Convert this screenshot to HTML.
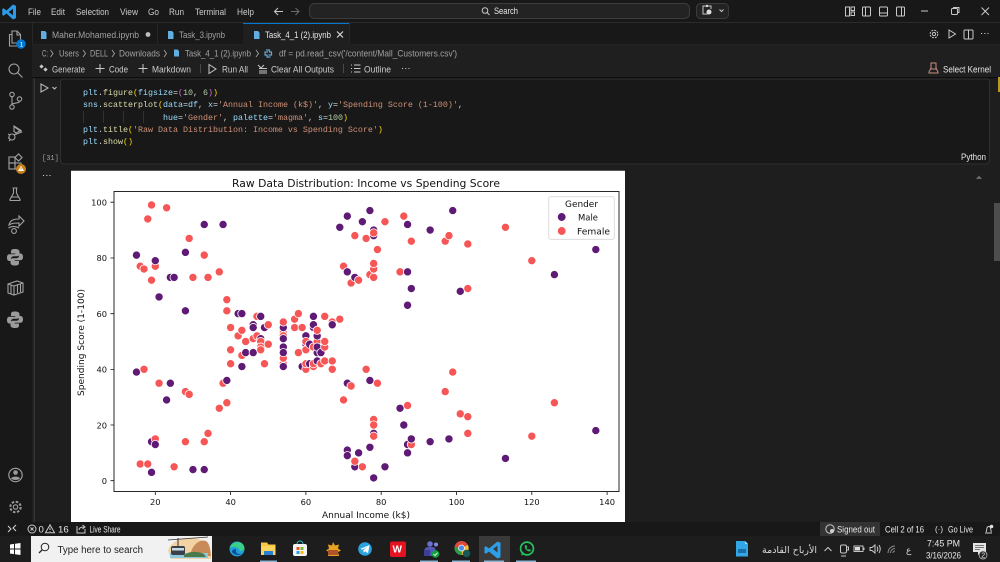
<!DOCTYPE html>
<html><head><meta charset="utf-8"><title>Task_4_1</title>
<style>
html,body{margin:0;padding:0;width:1000px;height:562px;overflow:hidden;background:#1f1f1f}
svg{display:block;position:absolute;left:0;top:0}
text{font-family:"Liberation Sans",sans-serif;font-size:9.6px;fill:#cccccc;white-space:pre}
.d{fill:#a2a2a2}
.w{fill:#e8e8e8}
.mono{font-family:"Liberation Mono",monospace;font-size:8.34px}
.c text,.c{font-family:"DejaVu Sans",sans-serif;fill:#111}
.ic{fill:none;stroke:#c8c8c8;stroke-width:1}
.ab{fill:none;stroke:#a2a2a2;stroke-width:1.1}
circle.m,circle.f{cx:calc(var(--x)*3.765px + 80px);cy:calc(480.7px - var(--y)*2.785px);r:4.1px;stroke:#fff;stroke-width:.8px}
circle.m{fill:#5e1a74}
circle.f{fill:#f65656}
tspan.v{fill:#9cdcfe}tspan.y{fill:#dcdcaa}tspan.g{fill:#ffd700}tspan.o{fill:#da70d6}tspan.s{fill:#ce9178}tspan.n{fill:#b5cea8}tspan.t{fill:#d4d4d4}
</style></head><body>
<svg width="1000" height="562" viewBox="0 0 1000 562">
<!-- base -->
<rect width="1000" height="562" fill="#1e1e1e"/>
<rect width="1000" height="23" fill="#181818"/>
<rect y="22" width="1000" height="1" fill="#2b2b2b"/>
<rect y="23" width="1000" height="22" fill="#181818"/>
<rect y="44.500" width="1000" height="1" fill="#2b2b2b"/>
<rect x="0" y="23" width="32" height="499" fill="#181818"/>
<rect x="32" y="45" width="968" height="32" fill="#1f1f1f"/>
<rect x="32" y="77" width="968" height="1.300" fill="#0e0e0e"/>
<rect x="33.500" y="78" width="1.500" height="444" fill="#333"/>
<!-- logo -->
<path d="M13 4.500 6.500 10.500 3.500 8.300 2.300 8.900v6.200l1.200.6 3-2.200L13 19.500l3-1.400V5.900zM13 8.800v6.400L8.700 12z" fill="#2b9be8" fill-rule="evenodd"/>
<!-- menu -->
<text x="28" y="15" textLength="13" lengthAdjust="spacingAndGlyphs">File</text>
<text x="51" y="15" textLength="14" lengthAdjust="spacingAndGlyphs">Edit</text>
<text x="76" y="15" textLength="33" lengthAdjust="spacingAndGlyphs">Selection</text>
<text x="120" y="15" textLength="18" lengthAdjust="spacingAndGlyphs">View</text>
<text x="148" y="15" textLength="11" lengthAdjust="spacingAndGlyphs">Go</text>
<text x="169" y="15" textLength="15" lengthAdjust="spacingAndGlyphs">Run</text>
<text x="195" y="15" textLength="31" lengthAdjust="spacingAndGlyphs">Terminal</text>
<text x="237" y="15" textLength="17" lengthAdjust="spacingAndGlyphs">Help</text>
<path class="ic" d="M283 11.500h-8M278 8l-3.500 3.500L278 15"/>
<path d="M299 11.500h-8M295.500 8l3.500 3.500L295.500 15" fill="none" stroke="#6a6a6a"/>
<rect x="309.500" y="3.500" width="380" height="15" rx="5" fill="#232323" stroke="#3c3c3c"/>
<circle cx="485" cy="10.500" r="2.800" class="ic"/><path class="ic" d="M487 12.500l2.500 2.500"/>
<text x="494" y="14" class="w" textLength="24" lengthAdjust="spacingAndGlyphs">Search</text>
<rect x="696.500" y="3.500" width="32" height="15" rx="4" fill="#232323" stroke="#3c3c3c"/>
<path class="ic" d="M708 14h-5v-8h8v3"/><circle cx="709" cy="12" r="2.500" fill="#ddd"/><circle cx="707" cy="6" r="1.200" fill="#ddd"/>
<path class="ic" d="M719.500 9.500l2 2 2-2"/>
<g class="ic" stroke="#dcdcdc"><rect x="845.500" y="7" width="4" height="9"/><rect x="851" y="7" width="3.500" height="3.500"/><rect x="851" y="12" width="3.500" height="3.500"/>
<rect x="862.500" y="7" width="8" height="9" rx="1"/><path d="M865.500 7v9"/>
<rect x="879.500" y="7" width="8" height="9" rx="1"/><path d="M879.500 13h8"/>
<rect x="896.500" y="7" width="8" height="9" rx="1"/><path d="M901.500 7v9"/>
<path d="M921 11h7"/><rect x="951.500" y="8.500" width="6" height="6" rx="1"/><path d="M953.500 8.500v-1h5.500v5h-1"/>
<path d="M981.500 7.500l7.500 7.500M989 7.500 981.500 15"/></g>
<!-- tabs -->
<rect x="157" y="23" width=".8" height="21" fill="#2b2b2b"/>
<rect x="243" y="23" width="106" height="22" fill="#1f1f1f"/>
<rect x="243" y="23" width="106" height="1" fill="#0078d4"/>
<rect x="349" y="23" width=".8" height="21" fill="#2b2b2b"/>
<rect x="32" y="23" width=".8" height="21" fill="#2b2b2b"/>
<g fill="#61aee0"><path d="M41 31h4l1.500 1.500V39h-5.500zM168 31h4l1.500 1.500V39h-5.500zM254 31h4l1.500 1.500V39h-5.500z"/></g>
<text x="52" y="38" class="d" textLength="87" lengthAdjust="spacingAndGlyphs">Maher.Mohamed.ipynb</text>
<circle cx="148" cy="34.500" r="2.400" fill="#bdbdbd"/>
<text x="179" y="38" class="d" textLength="46" lengthAdjust="spacingAndGlyphs">Task_3.ipynb</text>
<text x="265" y="38" class="w" textLength="66" lengthAdjust="spacingAndGlyphs">Task_4_1 (2).ipynb</text>
<path d="M337 31.500l6 6M343 31.500l-6 6" stroke="#e0e0e0" stroke-width="1.100" fill="none"/>
<g class="ic"><circle cx="934" cy="34" r="1.600"/><circle cx="934" cy="34" r="3.800" stroke-dasharray="2 1"/><path d="M949 30v8l6.500-4z"/><rect x="964" y="30" width="9" height="9" rx="1"/><path d="M968.500 30v9"/></g>
<text x="980" y="36" class="w">···</text>
<!-- breadcrumbs -->
<text x="42" y="56.500" class="d" textLength="6" lengthAdjust="spacingAndGlyphs">C:</text>
<path d="M50.500 50l2.500 3.500-2.500 3.500M83 50l2.500 3.500L83 57M112 50l2.500 3.500-2.500 3.500M164 50l2.500 3.500-2.500 3.500M256 50l2.500 3.500-2.500 3.500" fill="none" stroke="#a2a2a2" stroke-width=".9"/>
<text x="59" y="56.500" class="d" textLength="20" lengthAdjust="spacingAndGlyphs">Users</text>
<text x="90" y="56.500" class="d" textLength="18" lengthAdjust="spacingAndGlyphs">DELL</text>
<text x="119" y="56.500" class="d" textLength="41" lengthAdjust="spacingAndGlyphs">Downloads</text>
<path d="M174 49.500h3.500l1.500 1.500v5.500h-5z" fill="#61aee0"/>
<text x="185" y="56.500" class="d" textLength="66" lengthAdjust="spacingAndGlyphs">Task_4_1 (2).ipynb</text>
<path d="M266 50h3.500v2h2v3h-3M270.500 57h-3.500v-2h-2v-3h3" fill="none" stroke="#6aa3cc" stroke-width="1.200"/>
<text x="279" y="56.500" class="d" textLength="178" lengthAdjust="spacingAndGlyphs">df = pd.read_csv('/content/Mall_Customers.csv')</text>
<!-- toolbar -->
<g fill="#c8c8c8"><rect x="40" y="65" width="3" height="3" transform="rotate(45 41.500 66.500)"/><rect x="44" y="68" width="3" height="3" transform="rotate(45 45.500 69.500)"/></g>
<text x="52" y="72.500" textLength="33" lengthAdjust="spacingAndGlyphs">Generate</text>
<path class="ic" d="M100 64v9M95.500 68.500h9M143 64v9M138.500 68.500h9"/>
<text x="109" y="72.500" textLength="19" lengthAdjust="spacingAndGlyphs">Code</text>
<text x="152" y="72.500" textLength="39" lengthAdjust="spacingAndGlyphs">Markdown</text>
<rect x="200" y="64" width=".8" height="9" fill="#555"/>
<path class="ic" d="M209 64.500v9l7-4.500z"/>
<text x="222" y="72.500" textLength="26" lengthAdjust="spacingAndGlyphs">Run All</text>
<path class="ic" d="M258 65l3 3 3-3M259 68.500h8M259 71h8M259 73h8"/>
<text x="271" y="72.500" textLength="63" lengthAdjust="spacingAndGlyphs">Clear All Outputs</text>
<rect x="343" y="64" width=".8" height="9" fill="#555"/>
<path class="ic" d="M351 65h1M351 68.500h1M351 72h1M354 65h6.500M354 68.500h6.500M354 72h6.500"/>
<text x="364" y="72.500" textLength="27" lengthAdjust="spacingAndGlyphs">Outline</text>
<text x="401" y="71" class="w">···</text>
<path d="M431 63h5v5l2 4v1h-9v-1l2-4zM431 69h5" fill="none" stroke="#c98f7d" stroke-width="1" transform="translate(500 0)"/>
<text x="943" y="72.500" class="w" textLength="48" lengthAdjust="spacingAndGlyphs">Select Kernel</text>
<!-- activity bar -->
<path class="ab" d="M12 31h5l3.500 3.500V43H12zM17 31v4h3.500M12 34.500H9.500V46H17v-3"/>
<circle cx="21" cy="44" r="4.700" fill="#0078d4"/><text x="19.600" y="46.500" style="fill:#fff;font-size:6.500px">1</text>
<circle cx="14" cy="69" r="5" class="ab"/><path class="ab" d="M17.500 72.500l5 5"/>
<g class="ab"><circle cx="12" cy="94.500" r="2.200"/><circle cx="12" cy="107" r="2.200"/><circle cx="19.500" cy="99" r="2.200"/><path d="M12 96.700v8M19.500 101.200c0 2.500-7.500 1.500-7.500 3.300"/></g>
<g class="ab"><path d="M14 126.500v5l2 1.500 5-2.500-7-4.500zM14 126.500l7.500 5.500-6 2.500"/><circle cx="12" cy="137" r="3"/><path d="M8 134l2 1M8 138h1.500M9 141l1.500-1.500M16 134l-2 1"/></g>
<g class="ab"><rect x="9" y="157" width="6" height="6"/><rect x="9" y="163" width="6" height="6"/><rect x="15" y="163" width="6" height="6"/><rect x="16" y="155" width="5" height="5" transform="rotate(45 18.500 157.500)"/></g>
<circle cx="21" cy="169" r="5" fill="#c8801a"/><path d="M21 165.800 24 171h-6z" fill="#fff"/><rect x="20.600" y="167.300" width=".9" height="2.200" fill="#c8801a"/>
<path class="ab" d="M12.500 188h5M13.500 188v5l-3.500 6.500q-.5 1 .5 1h9q1 0 .5-1l-3.500-6.500v-5M11.500 197h7"/>
<path class="ab" d="M9 225c1-5 5-6 10-6v-3l5 5-5 5v-3c-4 0-7 0-10 2z"/><circle cx="14" cy="231" r="2.400" class="ab"/><path class="ab" d="M8.500 228c3-2 7-2 10.500 0"/>
<g fill="#9b9b9b"><path id="py" d="M15 249c-2.500 0-4 .7-4 2.300v2.200h4.300v.8H9.500c-1.800 0-2.500 1.300-2.500 3.300 0 2 .8 3.400 2.500 3.400h1.500v-2.200c0-1.500 1.300-2.600 2.800-2.600h3.500c1.300 0 2.200-1 2.200-2.200v-2.500c0-1.500-1.800-2.500-4.500-2.500zM15 265.500c2.500 0 4-.7 4-2.300V261h-4.300v-.8h5.800c1.800 0 2.500-1.300 2.500-3.300 0-2-.8-3.400-2.500-3.400H19v2.200c0 1.500-1.300 2.600-2.800 2.600h-3.500c-1.300 0-2.200 1-2.200 2.200v2.500c0 1.500 1.800 2.500 4.500 2.500z"/>
<use href="#py" y="62.500"/></g>
<g class="ab"><path d="M8 284l9-3 6 2v9l-9 3-6-2zM8 284l6 2v9M14 286l9-3M11 285v8.500M17.500 284.500v8.500M20.500 283.500V292"/></g>
<circle cx="15.500" cy="475" r="6.700" class="ab"/><circle cx="15.500" cy="472.500" r="2.300" fill="#9b9b9b"/><path d="M11 478.500c1-2.500 8-2.500 9 0-2 2-7 2-9 0z" fill="#9b9b9b"/>
<circle cx="15.500" cy="507" r="2.200" class="ab"/><circle cx="15.500" cy="507" r="5.200" fill="none" stroke="#9b9b9b" stroke-width="2" stroke-dasharray="2.500 1.600"/>
<!-- code cell -->
<rect x="60.500" y="79" width="929" height="85" rx="3" fill="#181818" stroke="#2f2f2f"/>
<path class="ic" d="M41 84v8l7-4z"/><path class="ic" d="M52.500 87l2 2 2-2"/>
<g fill="#3c3c3c"><rect x="83" y="111" width=".7" height="12"/><rect x="103" y="111" width=".7" height="12"/><rect x="123" y="111" width=".7" height="12"/><rect x="143" y="111" width=".7" height="12"/></g>
<text x="83" y="95" class="mono"><tspan class="v">plt</tspan><tspan class="t">.</tspan><tspan class="y">figure</tspan><tspan class="g">(</tspan><tspan class="v">figsize</tspan><tspan class="t">=</tspan><tspan class="o">(</tspan><tspan class="n">10</tspan><tspan class="t">, </tspan><tspan class="n">6</tspan><tspan class="o">)</tspan><tspan class="g">)</tspan></text>
<text x="83" y="107" class="mono"><tspan class="v">sns</tspan><tspan class="t">.</tspan><tspan class="y">scatterplot</tspan><tspan class="g">(</tspan><tspan class="v">data</tspan><tspan class="t">=</tspan><tspan class="v">df</tspan><tspan class="t">, </tspan><tspan class="v">x</tspan><tspan class="t">=</tspan><tspan class="s">'Annual Income (k$)'</tspan><tspan class="t">, </tspan><tspan class="v">y</tspan><tspan class="t">=</tspan><tspan class="s">'Spending Score (1-100)'</tspan><tspan class="t">,</tspan></text>
<text x="163" y="120" class="mono"><tspan class="v">hue</tspan><tspan class="t">=</tspan><tspan class="s">'Gender'</tspan><tspan class="t">, </tspan><tspan class="v">palette</tspan><tspan class="t">=</tspan><tspan class="s">'magma'</tspan><tspan class="t">, </tspan><tspan class="v">s</tspan><tspan class="t">=</tspan><tspan class="n">100</tspan><tspan class="g">)</tspan></text>
<text x="83" y="132" class="mono"><tspan class="v">plt</tspan><tspan class="t">.</tspan><tspan class="y">title</tspan><tspan class="g">(</tspan><tspan class="s">'Raw Data Distribution: Income vs Spending Score'</tspan><tspan class="g">)</tspan></text>
<text x="83" y="144" class="mono"><tspan class="v">plt</tspan><tspan class="t">.</tspan><tspan class="y">show</tspan><tspan class="g">()</tspan></text>
<text x="42" y="160" class="mono d" style="font-size:7px">[31]</text>
<text x="961" y="160" class="w" textLength="25" lengthAdjust="spacingAndGlyphs">Python</text>
<text x="42" y="178" class="w">···</text>
<path d="M976 179l3-3.500 3 3.500z" fill="#6a6a6a"/>
<rect x="994" y="203" width="6" height="58" fill="#4d4d4d"/>
<rect x="998" y="77" width="2" height="15" fill="#b99a1f"/>
<!-- figure -->
<rect x="71" y="170" width="554" height="352" fill="#fff"/>
<rect x="71" y="170" width="554" height="1" fill="#555"/>
<g class="c">
<rect x="114" y="191.500" width="505" height="300" fill="none" stroke="#111" stroke-width=".9"/>
<text x="232" y="187" style="font-size:10.500px" textLength="268" lengthAdjust="spacingAndGlyphs">Raw Data Distribution: Income vs Spending Score</text>
<path d="M155.300 492v3M230.600 492v3M305.900 492v3M381.200 492v3M456.500 492v3M531.800 492v3M607.100 492v3M114 202.200h-3.500M114 258h-3.500M114 313.700h-3.500M114 369.400h-3.500M114 425h-3.500M114 480.700h-3.500" stroke="#111" stroke-width=".8" fill="none"/>
<text x="155.300" y="505" text-anchor="middle" style="font-size:8.300px">20</text>
<text x="230.600" y="505" text-anchor="middle" style="font-size:8.300px">40</text>
<text x="305.900" y="505" text-anchor="middle" style="font-size:8.300px">60</text>
<text x="381.200" y="505" text-anchor="middle" style="font-size:8.300px">80</text>
<text x="456.500" y="505" text-anchor="middle" style="font-size:8.300px">100</text>
<text x="531.800" y="505" text-anchor="middle" style="font-size:8.300px">120</text>
<text x="607.100" y="505" text-anchor="middle" style="font-size:8.300px">140</text>
<text x="107" y="205.500" text-anchor="end" style="font-size:8.300px">100</text>
<text x="107" y="261.200" text-anchor="end" style="font-size:8.300px">80</text>
<text x="107" y="317" text-anchor="end" style="font-size:8.300px">60</text>
<text x="107" y="372.600" text-anchor="end" style="font-size:8.300px">40</text>
<text x="107" y="428.300" text-anchor="end" style="font-size:8.300px">20</text>
<text x="107" y="484" text-anchor="end" style="font-size:8.300px">0</text>
<text x="322" y="518" style="font-size:8.800px" textLength="88" lengthAdjust="spacingAndGlyphs">Annual Income (k$)</text>
<text transform="translate(84 396) rotate(-90)" style="font-size:8.800px" textLength="107" lengthAdjust="spacingAndGlyphs">Spending Score (1-100)</text>
</g>
<g>
<circle class=m style=--x:15;--y:39 /><circle class=m style=--x:15;--y:81 /><circle class=f style=--x:16;--y:6 /><circle class=f style=--x:16;--y:77 /><circle class=f style=--x:17;--y:40 /><circle class=f style=--x:17;--y:76 /><circle class=f style=--x:18;--y:6 /><circle class=f style=--x:18;--y:94 /><circle class=m style=--x:19;--y:3 /><circle class=f style=--x:19;--y:72 />
<circle class=m style=--x:19;--y:14 /><circle class=f style=--x:19;--y:99 /><circle class=f style=--x:20;--y:15 /><circle class=f style=--x:20;--y:77 /><circle class=m style=--x:20;--y:13 /><circle class=m style=--x:20;--y:79 /><circle class=f style=--x:21;--y:35 /><circle class=m style=--x:21;--y:66 /><circle class=m style=--x:23;--y:29 /><circle class=f style=--x:23;--y:98 />
<circle class=m style=--x:24;--y:35 /><circle class=m style=--x:24;--y:73 /><circle class=f style=--x:25;--y:5 /><circle class=m style=--x:25;--y:73 /><circle class=f style=--x:28;--y:14 /><circle class=m style=--x:28;--y:82 /><circle class=f style=--x:28;--y:32 /><circle class=m style=--x:28;--y:61 /><circle class=f style=--x:29;--y:31 /><circle class=f style=--x:29;--y:87 />
<circle class=m style=--x:30;--y:4 /><circle class=f style=--x:30;--y:73 /><circle class=m style=--x:33;--y:4 /><circle class=m style=--x:33;--y:92 /><circle class=f style=--x:33;--y:14 /><circle class=f style=--x:33;--y:81 /><circle class=f style=--x:34;--y:17 /><circle class=f style=--x:34;--y:73 /><circle class=f style=--x:37;--y:26 /><circle class=f style=--x:37;--y:75 />
<circle class=f style=--x:38;--y:35 /><circle class=m style=--x:38;--y:92 /><circle class=m style=--x:39;--y:36 /><circle class=f style=--x:39;--y:61 /><circle class=f style=--x:39;--y:28 /><circle class=f style=--x:39;--y:65 /><circle class=f style=--x:40;--y:55 /><circle class=f style=--x:40;--y:47 /><circle class=f style=--x:40;--y:42 /><circle class=f style=--x:40;--y:42 />
<circle class=f style=--x:42;--y:52 /><circle class=m style=--x:42;--y:60 /><circle class=f style=--x:43;--y:54 /><circle class=m style=--x:43;--y:60 /><circle class=f style=--x:43;--y:45 /><circle class=m style=--x:43;--y:41 /><circle class=f style=--x:44;--y:50 /><circle class=m style=--x:44;--y:46 /><circle class=f style=--x:46;--y:51 /><circle class=m style=--x:46;--y:46 />
<circle class=m style=--x:46;--y:56 /><circle class=m style=--x:46;--y:55 /><circle class=f style=--x:47;--y:52 /><circle class=f style=--x:47;--y:59 /><circle class=m style=--x:48;--y:51 /><circle class=m style=--x:48;--y:59 /><circle class=f style=--x:48;--y:50 /><circle class=f style=--x:48;--y:48 /><circle class=m style=--x:48;--y:59 /><circle class=f style=--x:48;--y:47 />
<circle class=m style=--x:49;--y:55 /><circle class=f style=--x:49;--y:42 /><circle class=f style=--x:50;--y:49 /><circle class=f style=--x:50;--y:56 /><circle class=m style=--x:54;--y:47 /><circle class=m style=--x:54;--y:54 /><circle class=f style=--x:54;--y:53 /><circle class=m style=--x:54;--y:48 /><circle class=f style=--x:54;--y:52 /><circle class=f style=--x:54;--y:42 />
<circle class=m style=--x:54;--y:51 /><circle class=m style=--x:54;--y:55 /><circle class=m style=--x:54;--y:41 /><circle class=f style=--x:54;--y:44 /><circle class=f style=--x:54;--y:57 /><circle class=m style=--x:54;--y:46 /><circle class=f style=--x:57;--y:58 /><circle class=f style=--x:57;--y:55 /><circle class=f style=--x:58;--y:60 /><circle class=f style=--x:58;--y:46 />
<circle class=f style=--x:59;--y:55 /><circle class=m style=--x:59;--y:41 /><circle class=m style=--x:60;--y:49 /><circle class=f style=--x:60;--y:40 /><circle class=f style=--x:60;--y:42 /><circle class=m style=--x:60;--y:52 /><circle class=f style=--x:60;--y:47 /><circle class=f style=--x:60;--y:50 /><circle class=m style=--x:61;--y:42 /><circle class=m style=--x:61;--y:49 />
<circle class=f style=--x:62;--y:41 /><circle class=f style=--x:62;--y:48 /><circle class=m style=--x:62;--y:59 /><circle class=m style=--x:62;--y:55 /><circle class=m style=--x:62;--y:56 /><circle class=f style=--x:62;--y:42 /><circle class=f style=--x:63;--y:50 /><circle class=m style=--x:63;--y:46 /><circle class=m style=--x:63;--y:43 /><circle class=m style=--x:63;--y:48 />
<circle class=m style=--x:63;--y:52 /><circle class=f style=--x:63;--y:54 /><circle class=f style=--x:64;--y:42 /><circle class=m style=--x:64;--y:46 /><circle class=f style=--x:65;--y:48 /><circle class=f style=--x:65;--y:50 /><circle class=f style=--x:65;--y:43 /><circle class=f style=--x:65;--y:59 /><circle class=f style=--x:67;--y:43 /><circle class=f style=--x:67;--y:57 />
<circle class=m style=--x:67;--y:56 /><circle class=f style=--x:67;--y:40 /><circle class=f style=--x:69;--y:58 /><circle class=m style=--x:69;--y:91 /><circle class=f style=--x:70;--y:29 /><circle class=f style=--x:70;--y:77 /><circle class=m style=--x:71;--y:35 /><circle class=m style=--x:71;--y:95 /><circle class=m style=--x:71;--y:11 /><circle class=m style=--x:71;--y:75 />
<circle class=m style=--x:71;--y:9 /><circle class=m style=--x:71;--y:75 /><circle class=f style=--x:72;--y:34 /><circle class=f style=--x:72;--y:71 /><circle class=m style=--x:73;--y:5 /><circle class=f style=--x:73;--y:88 /><circle class=f style=--x:73;--y:7 /><circle class=m style=--x:73;--y:73 /><circle class=m style=--x:74;--y:10 /><circle class=f style=--x:74;--y:72 />
<circle class=f style=--x:75;--y:5 /><circle class=m style=--x:75;--y:93 /><circle class=f style=--x:76;--y:40 /><circle class=f style=--x:76;--y:87 /><circle class=m style=--x:77;--y:12 /><circle class=m style=--x:77;--y:97 /><circle class=m style=--x:77;--y:36 /><circle class=f style=--x:77;--y:74 /><circle class=f style=--x:78;--y:22 /><circle class=m style=--x:78;--y:90 />
<circle class=m style=--x:78;--y:17 /><circle class=m style=--x:78;--y:88 /><circle class=f style=--x:78;--y:20 /><circle class=f style=--x:78;--y:76 /><circle class=f style=--x:78;--y:16 /><circle class=f style=--x:78;--y:89 /><circle class=m style=--x:78;--y:1 /><circle class=f style=--x:78;--y:78 /><circle class=m style=--x:78;--y:1 /><circle class=f style=--x:78;--y:73 />
<circle class=f style=--x:79;--y:35 /><circle class=f style=--x:79;--y:83 /><circle class=m style=--x:81;--y:5 /><circle class=f style=--x:81;--y:93 /><circle class=m style=--x:85;--y:26 /><circle class=f style=--x:85;--y:75 /><circle class=m style=--x:86;--y:20 /><circle class=f style=--x:86;--y:95 /><circle class=f style=--x:87;--y:27 /><circle class=m style=--x:87;--y:63 />
<circle class=m style=--x:87;--y:13 /><circle class=m style=--x:87;--y:75 /><circle class=m style=--x:87;--y:10 /><circle class=m style=--x:87;--y:92 /><circle class=f style=--x:88;--y:13 /><circle class=f style=--x:88;--y:86 /><circle class=m style=--x:88;--y:15 /><circle class=m style=--x:88;--y:69 /><circle class=m style=--x:93;--y:14 /><circle class=m style=--x:93;--y:90 />
<circle class=f style=--x:97;--y:32 /><circle class=f style=--x:97;--y:86 /><circle class=m style=--x:98;--y:15 /><circle class=f style=--x:98;--y:88 /><circle class=f style=--x:99;--y:39 /><circle class=m style=--x:99;--y:97 /><circle class=f style=--x:101;--y:24 /><circle class=m style=--x:101;--y:68 /><circle class=f style=--x:103;--y:17 /><circle class=f style=--x:103;--y:85 />
<circle class=f style=--x:103;--y:23 /><circle class=f style=--x:103;--y:69 /><circle class=m style=--x:113;--y:8 /><circle class=f style=--x:113;--y:91 /><circle class=f style=--x:120;--y:16 /><circle class=f style=--x:120;--y:79 /><circle class=f style=--x:126;--y:28 /><circle class=m style=--x:126;--y:74 /><circle class=m style=--x:137;--y:18 /><circle class=m style=--x:137;--y:83 />
</g>
<rect x="548.700" y="196.700" width="65.600" height="42.600" rx="2" fill="#fff" fill-opacity=".8" stroke="#d5d5d5" stroke-width=".8"/>
<g class="c">
<text x="565" y="207" style="font-size:8.800px" textLength="33" lengthAdjust="spacingAndGlyphs">Gender</text>
<text x="578" y="220.500" style="font-size:8.800px" textLength="20" lengthAdjust="spacingAndGlyphs">Male</text>
<text x="577" y="234.500" style="font-size:8.800px" textLength="33" lengthAdjust="spacingAndGlyphs">Female</text>
</g>
<circle cx="561.700" cy="217" r="4.300" fill="#5e1a74" stroke="#fff" stroke-width=".7"/>
<circle cx="561.700" cy="231" r="4.300" fill="#f65656" stroke="#fff" stroke-width=".7"/>
<!-- status bar -->
<rect y="522" width="1000" height="14" fill="#181818"/>
<path d="M8 526l3 3-3 3M16 525l-3 3 3 3" fill="none" stroke="#d5d5d5" stroke-width="1"/>
<circle cx="32" cy="529" r="4" class="ic"/><path class="ic" d="M30.500 527.500l3 3M33.500 527.500l-3 3"/>
<text x="38.500" y="532.500" class="w">0</text>
<path class="ic" d="M50 524.800l4.500 8h-9zM50 527.500v2.500M50 531v.7"/>
<text x="58" y="532.500" class="w">16</text>
<path class="ic" d="M77 526v7h8v-4M79 530c0-2 2-3 5-3M82.500 525l2.500 2-2.500 2"/>
<text x="89.500" y="532.500" class="w" textLength="31" lengthAdjust="spacingAndGlyphs">Live Share</text>
<rect x="820" y="522" width="60" height="14" fill="#333"/>
<circle cx="830" cy="529" r="4.200" class="ic"/><circle cx="832" cy="531" r="2" fill="#d0d0d0"/>
<text x="837" y="532.500" class="w" textLength="38" lengthAdjust="spacingAndGlyphs">Signed out</text>
<text x="885" y="532.500" class="w" textLength="39" lengthAdjust="spacingAndGlyphs">Cell 2 of 16</text>
<text x="935" y="532" class="w" style="font-size:8px">(·)</text>
<text x="948" y="532.500" class="w" textLength="25" lengthAdjust="spacingAndGlyphs">Go Live</text>
<path class="ic" d="M985 533h7M986 532c1-1 .5-3 1-4 .5-2 3-2 3.500 0 .5 1 0 3 1 4"/><circle cx="991.500" cy="526.500" r="1.800" fill="#ddd"/>
<!-- taskbar -->
<rect y="536" width="1000" height="26" fill="#1d1d1d"/>
<path d="M10 544.500l4-.6v4.600h-4zM15 543.800l5.500-.8v5.500H15zM10 549.500h4v4.600l-4-.6zM15 549.500h5.500v5.500L15 554.200z" fill="#fff"/>
<rect x="31" y="536" width="181" height="26" fill="#f1f1f1"/>
<circle cx="45" cy="547" r="3.800" fill="none" stroke="#222" stroke-width="1"/><path d="M42.300 549.700 39 553" stroke="#222" stroke-width="1.300"/>
<text x="57.500" y="553" textLength="85.500" lengthAdjust="spacingAndGlyphs" style="fill:#222;font-size:10px">Type here to search</text>
<path d="M168 551c2-10 15-14 26-13 8 1 14 5 17 13v8h-40z" fill="#f3d3a4"/>
<path d="M190 556c2-12 10-17 16-15 4 3 4 8 5 15z" fill="#c98a5a"/>
<rect x="170" y="553" width="38" height="5" fill="#8fc7dd"/><path d="M184 555c5-4 14-4 20-1l2 3h-22z" fill="#4a7a4a"/>
<path d="M168 540l40-3" stroke="#333" stroke-width=".7"/>
<rect x="171" y="546" width="14" height="9" rx="2" fill="#3a3f48"/><rect x="172" y="548" width="12" height="2.500" fill="#c8d8e0"/><path d="M178 538v8" stroke="#333"/>
<!-- taskbar apps -->
<circle cx="237" cy="549" r="7.500" fill="#1f9fd8"/><path d="M229.500 549c1-8 14-10 15-1 0 2-2 3-5 3 1-4-9-6-10-2z" fill="#3bd08a"/><path d="M232 552c2 3 7 4 10 2-4 1-7-1-6-5-2 0-4 1-4 3z" fill="#0d4a96"/>
<path d="M261 542.500h6l1.500 2h7v10.500h-14.500z" fill="#f6c744"/><rect x="261" y="546" width="14.500" height="9" fill="#fad45c"/><rect x="264" y="551" width="9" height="4" fill="#2b7fd4"/>
<rect x="293" y="544" width="14" height="12" rx="2" fill="#f4f4f4"/><path d="M297 544c0-4 6-4 6 0" fill="none" stroke="#31bcd0"/><rect x="296.500" y="547" width="3" height="3" fill="#e8512d"/><rect x="300.500" y="547" width="3" height="3" fill="#7cbb2f"/><rect x="296.500" y="551" width="3" height="3" fill="#21a1f1"/><rect x="300.500" y="551" width="3" height="3" fill="#fdb813"/>
<path d="M333 542l2 3.500 4-1-1 4 3 2-3 1.500 1 4h-11l1-4-3-1.500 3-2-1-4 4 1z" fill="#e8a321"/><rect x="328" y="550" width="10" height="5" fill="#b0522a"/>
<circle cx="365" cy="549" r="6.800" fill="#2aa4df"/><path d="M360.500 548.800l9-3.700-1.500 8.200-2.800-2-1.400 1.400-.4-2.500 3.600-3-4.700 2.600z" fill="#fff"/>
<rect x="390" y="541.500" width="16" height="15.500" rx="2" fill="#e5121f"/><text x="392.500" y="552.500" style="fill:#fff;font-size:10px;font-weight:bold">W</text>
<circle cx="430" cy="544" r="2.800" fill="#6b6fd0"/><circle cx="436" cy="544.500" r="2" fill="#8388dc"/><path d="M424.500 556v-6c0-2 2-3 4-3h4c2 0 3 1 3 3v6z" fill="#5458b4"/><rect x="424" y="550" width="6" height="6" fill="#3c3f9a"/><circle cx="435.500" cy="554" r="3.800" fill="#12a33e"/><path d="M433.500 554l1.500 1.500 2.500-2.800" stroke="#fff" fill="none" stroke-width=".8"/>
<circle cx="461.500" cy="548" r="7" fill="#dd4a3a"/><path d="M461.500 548 468 545a7 7 0 0 1-6 10z" fill="#f4c12c"/><path d="M461.500 548 461 555a7 7 0 0 1-6.500-8z" fill="#2f9b48"/><circle cx="461.500" cy="548" r="3" fill="#4a8ff0" stroke="#eee" stroke-width=".8"/><circle cx="466.500" cy="553.500" r="3.800" fill="#155a58"/>
<rect x="479" y="536" width="31" height="26" fill="#3a3a3a"/>
<path d="M497.500 541.500 489 548.500l-3-2.300-1.500.8v6l1.500.8 3-2.300 8.500 7 3-1.300V542.800zM497.500 545.500v7L493 549z" fill="#2d9ee8" fill-rule="evenodd"/>
<circle cx="527" cy="548.500" r="6.400" fill="none" stroke="#22c35e" stroke-width="1.700"/><path d="M521 555.500l1.500-4 2.500 2.500zM525 545.500c-1 3 2 6 5 6l1-1.500-2-1-1 .7c-.7-.4-1.300-1-1.500-1.800l.7-1-1-2z" fill="#22c35e"/>
<g fill="#8ab6d8"><rect x="260" y="560.500" width="17" height="1.500"/><rect x="420" y="560.500" width="18" height="1.500"/><rect x="452" y="560.500" width="18" height="1.500"/><rect x="484" y="560.500" width="20" height="1.500"/><rect x="516" y="560.500" width="20" height="1.500"/></g>
<!-- tray -->
<path d="M736 541h9l3 3v12.500h-12z" fill="#33a7e6"/><path d="M745 541l3 3h-3z" fill="#a7dbf5"/><rect x="738" y="549" width="8" height="4" fill="#1a6fa8"/>
<text x="817" y="553" text-anchor="start" direction="rtl" style="font-family:'DejaVu Sans',sans-serif;font-size:9.500px;fill:#d8d8d8">الأرباح القادمة</text>
<path class="ic" d="M824.500 551l3.500-3.500 3.500 3.500"/>
<rect x="840.500" y="545" width="6" height="8" rx="1.500" class="ic"/><path class="ic" d="M841 556h5M847 547h1.500v3H847"/>
<rect x="854" y="546" width="9" height="5.500" fill="none" stroke="#c2c2c2"/><rect x="855" y="547" width="5" height="3.500" fill="#ddd"/><rect x="863.300" y="547.500" width="1.200" height="2.500" fill="#c2c2c2"/>
<path class="ic" d="M870 547.500h2l3-2.500v8l-3-2.500h-2zM877 546.500q1.500 2.500 0 5M879 545q2.500 4 0 8"/>
<path d="M888 553a7 7 0 0 1 7-7M890.500 553a4.500 4.500 0 0 1 4.500-4.500M893 553a2 2 0 0 1 2-2" fill="none" stroke="#8d8d8d"/>
<text x="906" y="553" style="font-family:'DejaVu Sans',sans-serif;font-size:9px;fill:#d0d0d0">ع</text>
<text x="927" y="546.500" class="w" textLength="33" lengthAdjust="spacingAndGlyphs">7:45 PM</text>
<text x="926" y="558.500" class="w" textLength="35" lengthAdjust="spacingAndGlyphs">3/16/2026</text>
<path d="M973 543h13v9h-5l-3 3v-3h-5z" fill="#e4e4e4"/><path d="M975 545.500h9M975 547.500h9M975 549.500h5" stroke="#555" stroke-width=".7"/>
<circle cx="983" cy="555" r="4" fill="#222" stroke="#ccc" stroke-width=".7"/><text x="981.300" y="557.500" style="fill:#eee;font-size:7px">2</text>
</svg>
</body></html>
